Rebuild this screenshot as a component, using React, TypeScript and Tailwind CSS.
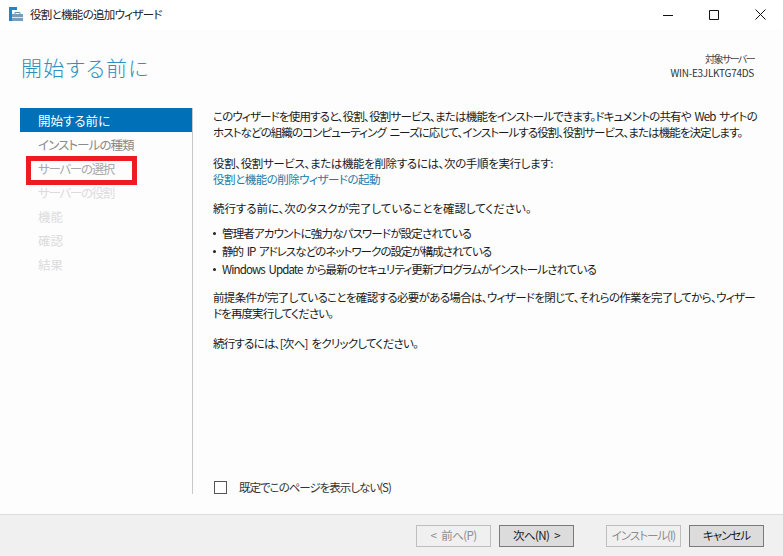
import React from 'react';

const font = { fontFamily: '"Noto Sans CJK JP", "Liberation Sans", sans-serif' };

const steps = [
  { label: '開始する前に', tone: 'bg-[#0071b9] text-white' },
  { label: 'インストールの種類', tone: 'text-[#8a8a8a] tracking-[-0.9px]' },
  { label: 'サーバーの選択', tone: 'text-[#a8a8a8] tracking-[-1.3px]', marked: true },
  { label: 'サーバーの役割', tone: 'text-[#dcdcdc] tracking-[-1.3px]' },
  { label: '機能', tone: 'text-[#dcdcdc]' },
  { label: '確認', tone: 'text-[#dcdcdc]' },
  { label: '結果', tone: 'text-[#dcdcdc]' },
];

const bullets = [
  { text: '管理者アカウントに強力なパスワードが設定されている', tone: 'tracking-[-0.84px]' },
  { text: '静的 IP アドレスなどのネットワークの設定が構成されている', tone: 'tracking-[-0.98px]' },
  { text: 'Windows Update から最新のセキュリティ更新プログラムがインストールされている', tone: 'tracking-[-0.88px]' },
];

const WizardIcon = () => (
  <svg width="14" height="14" viewBox="0 0 14 14">
    <path d="M0 0h8v3H3v11H0z" fill="#1c87d0" />
    <path d="M3 7h11v7H3z" fill="#7d9db5" />
    <path d="M3 10h11v1H3z" fill="#dfe7ed" />
    <path d="M6 7V5.5h5V7" fill="none" stroke="#6d8ea6" strokeWidth="1" />
  </svg>
);

const WizardButton = ({ label, disabled, tracking }: { label: string; disabled?: boolean; tracking: string }) => (
  <button
    className={`w-[75px] h-[22px] flex items-center justify-center whitespace-pre text-[11.5px] border [word-spacing:3px] ${tracking} ${
      disabled
        ? 'border-[#bfbfbf] bg-[#f0f0f0] text-[#8d8d8d]'
        : 'border-[#7a7a7a] bg-[#dcdcdc] text-[#1a1a1a]'
    }`}
  >
    {label}
  </button>
);

export default function App() {
  return (
    <div className="w-[783px] h-[556px] flex flex-col bg-white overflow-hidden text-[#1a1a1a] [font-feature-settings:'palt']" style={font}>
      {/* title bar */}
      <div className="h-[29px] shrink-0 flex items-center bg-white">
        <div className="ml-[9px] mr-[7px] mb-[2px] flex items-center"><WizardIcon /></div>
        <span className="text-[11.5px] tracking-[-0.7px] text-[#222]">役割と機能の追加ウィザード</span>
        <div className="ml-auto flex items-center">
          <svg width="10" height="10" viewBox="0 0 10 10" className="mr-[36px]"><path d="M0 5.5h10" stroke="#111" strokeWidth="1" /></svg>
          <svg width="10" height="10" viewBox="0 0 10 10" className="mr-[36px]"><path d="M.5.5h9v9h-9z" fill="none" stroke="#111" strokeWidth="1" /></svg>
          <svg width="11" height="11" viewBox="0 0 11 11" className="mr-[17px]"><path d="M.5.5l10 10M10.5.5l-10 10" stroke="#111" strokeWidth="1" /></svg>
        </div>
      </div>

      <div className="flex-1 flex flex-col bg-[#fdfdfd] min-h-0">
        {/* header */}
        <div className="h-[79px] shrink-0 flex justify-between pl-[21px] pr-[29px]">
          <h1 className="mt-[22px] text-[21px] leading-[32px] font-light tracking-[1.3px] text-[#2f8fc0]">開始する前に</h1>
          <div className="mt-[23px] text-right text-[10px] leading-[14px] text-[#444]">
            <div className="tracking-[-1.6px]">対象サーバー</div>
            <div className="tracking-[-0.27px] text-[#333]">WIN-E3JLKTG74DS</div>
          </div>
        </div>

        <div className="flex-1 flex min-h-0">
          {/* step list */}
          <nav className="w-[172px] ml-[20px] shrink-0 flex flex-col">
            {steps.map(s => (
              <div key={s.label} className={`relative h-[24px] shrink-0 flex items-center pl-[18px] pt-[2px] text-[12.5px] ${s.tone}`}>
                {s.label}
                {s.marked && <div className="absolute left-[6px] top-0 w-[111px] h-[29px] border-[5px] border-[#ed1c24]" />}
              </div>
            ))}
          </nav>

          {/* divider + content */}
          <div className="h-[386px] flex-1 border-l border-[#c8c8c8] pl-[20px] flex flex-col">
            <div className="text-[11.5px] leading-[16px] text-[#1a1a1a] whitespace-nowrap [word-spacing:2px]">
              <p className="tracking-[-0.83px]">このウィザードを使用すると、役割、役割サービス、または機能をインストールできます。ドキュメントの共有や Web サイトの</p>
              <p className="tracking-[-0.93px]">ホストなどの組織のコンピューティング ニーズに応じて、インストールする役割、役割サービス、または機能を決定します。</p>
              <p className="mt-[15px] tracking-[-0.36px]">役割、役割サービス、または機能を削除するには、次の手順を実行します:</p>
              <p className="tracking-[-0.5px] text-[#1a7ba8]">役割と機能の削除ウィザードの起動</p>
              <p className="mt-[13px] tracking-[-0.05px]">続行する前に、次のタスクが完了していることを確認してください。</p>
              <ul className="mt-[9px] flex flex-col gap-[2px]">
                {bullets.map(b => (
                  <li key={b.text} className={`flex items-center ${b.tone}`}>
                    <span className="w-[3px] h-[3px] rounded-full bg-[#222] mr-[6px]" />
                    {b.text}
                  </li>
                ))}
              </ul>
              <p className="mt-[12px] tracking-[-0.66px]">前提条件が完了していることを確認する必要がある場合は、ウィザードを閉じて、それらの作業を完了してから、ウィザー</p>
              <p className="tracking-[-0.9px]">ドを再度実行してください。</p>
              <p className="mt-[14px] tracking-[-0.76px]">続行するには、[次へ] をクリックしてください。</p>
            </div>
            <div className="mt-auto mb-[-2px] flex items-center">
              <span className="w-[13px] h-[13px] ml-[1px] border border-[#555] bg-white" />
              <span className="ml-[12px] text-[11.5px] tracking-[-1px] text-[#333]">既定でこのページを表示しない(S)</span>
            </div>
          </div>
        </div>
      </div>

      {/* footer */}
      <div className="h-[42px] shrink-0 border-t border-[#dcdcdc] bg-[#f0f0f0] flex items-center pl-[416px]">
        <WizardButton label="< 前へ(P)" disabled tracking="tracking-[-0.6px]" />
        <div className="ml-[8px]"><WizardButton label="次へ(N) >" tracking="tracking-[-0.6px]" /></div>
        <div className="ml-[32px]"><WizardButton label="インストール(I)" disabled tracking="tracking-[-1px]" /></div>
        <div className="ml-[8px]"><WizardButton label="キャンセル" tracking="tracking-[-1px]" /></div>
      </div>
    </div>
  );
}
